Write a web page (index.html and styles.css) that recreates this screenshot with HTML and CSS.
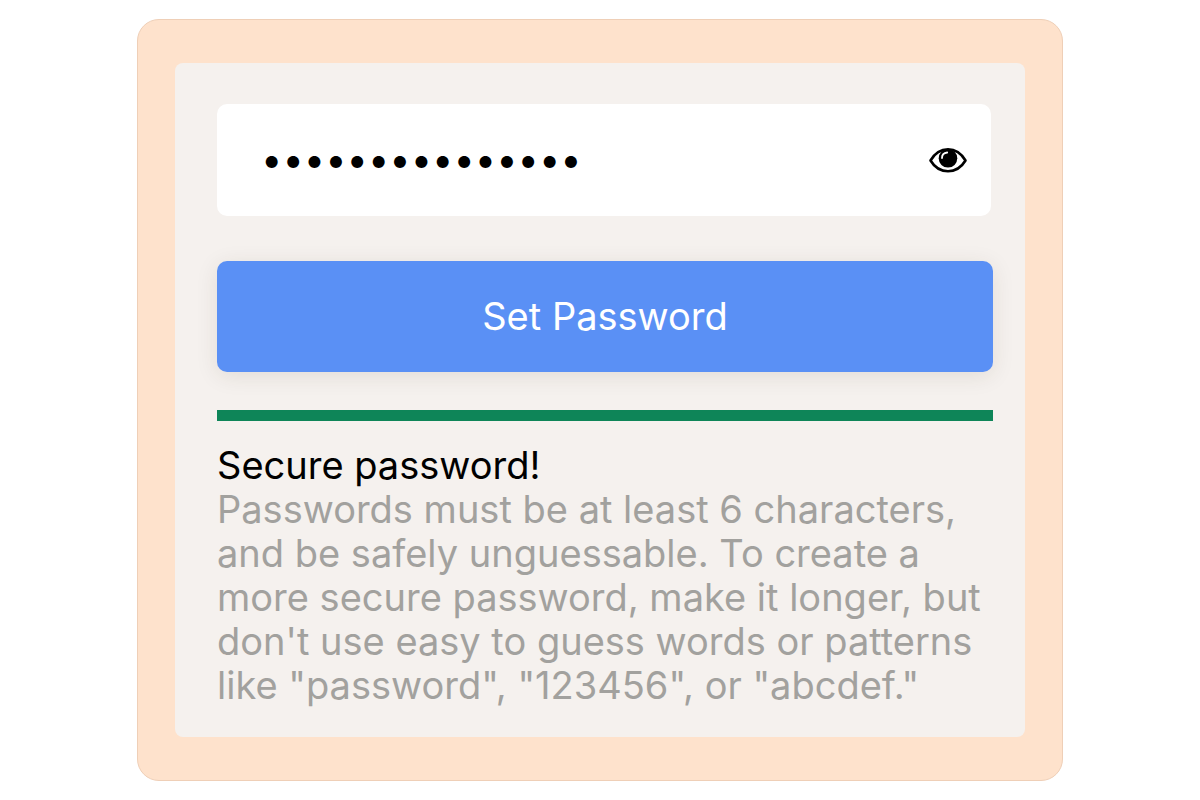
FILE: index.html
```html
<!DOCTYPE html>
<html lang="en">
<head>
<meta charset="utf-8">
<meta name="viewport" content="width=device-width, initial-scale=1">
<title>Set Password</title>
<link rel="stylesheet" href="styles.css">
</head>
<body>
<main class="card">
  <form class="panel">
    <div class="field">
      <input class="field-input" type="password" value="correcthorse123" aria-label="Password" autocomplete="new-password">
      <button class="reveal" type="button" aria-label="Show password">
        <svg class="eye" viewBox="0 0 40 28" aria-hidden="true">
          <path d="M2.500 14.500C7 7 13 3.300 20 3.300s13 3.700 17.500 11.200C33 22 27 25.200 20 25.200S7 22 2.500 14.500Z" fill="#fff" stroke="#000" stroke-width="2.600" stroke-linejoin="round"/>
          <circle cx="20" cy="12.300" r="9.300" fill="#000"/>
          <path d="M14 12c0-3 2.200-5.200 5.200-5.500" fill="none" stroke="#fff" stroke-width="1.800" stroke-linecap="round"/>
        </svg>
      </button>
    </div>
    <button class="submit" type="submit">Set Password</button>
    <div class="strength" role="img" aria-label="Password strength: secure"></div>
    <div class="feedback">
      <p class="status">Secure password!</p>
      <p class="hint">Passwords must be at least 6 characters, and be safely unguessable. To create a more secure password, make it longer, but don't use easy to guess words or patterns like "password", "123456", or "abcdef."</p>
    </div>
  </form>
</main>
</body>
</html>
```
FILE: styles.css
```css
* {
  box-sizing: border-box;
}

body {
  margin: 0;
  min-height: 100vh;
  padding: 16px;
  display: flex;
  align-items: center;
  justify-content: center;
  background: #fff;
  font-family: Inter, sans-serif;
  font-size: 38px;
  line-height: 44px;
  font-optical-sizing: none;
}

.card {
  width: 100%;
  max-width: 926px;
  padding: 43px 37px;
  background: #fee2cc;
  border: 1px solid #efcfb7;
  border-radius: 22px;
}

.panel {
  display: flex;
  flex-direction: column;
  padding: 41px 32px 30px 42px;
  background: #f5f1ee;
  border-radius: 8px;
}

.field {
  display: flex;
  align-items: center;
  margin-right: 2px;
  padding: 0 23px 0 44px;
  background: #fff;
  border-radius: 10px;
}

.field-input {
  flex: 1;
  min-width: 0;
  height: 112px;
  padding: 0 0 2px;
  border: 0;
  outline: 0;
  background: transparent;
  color: #000;
  font: inherit;
}

.reveal {
  display: flex;
  padding: 0;
  border: 0;
  background: transparent;
}

.eye {
  width: 40px;
  height: 28px;
}

.submit {
  margin-top: 45px;
  padding: 33px 16px 34px;
  border: 0;
  border-radius: 10px;
  background: #5a90f5;
  box-shadow: 0 4px 22px rgba(60, 50, 30, 0.1);
  color: #fff;
  font: inherit;
}

.strength {
  height: 11px;
  margin-top: 38px;
  background: #0e8558;
}

.feedback {
  margin-top: 22px;
}

.status,
.hint {
  margin: 0;
}

.status {
  color: #000;
}

.hint {
  color: #a2a19e;
}
```
